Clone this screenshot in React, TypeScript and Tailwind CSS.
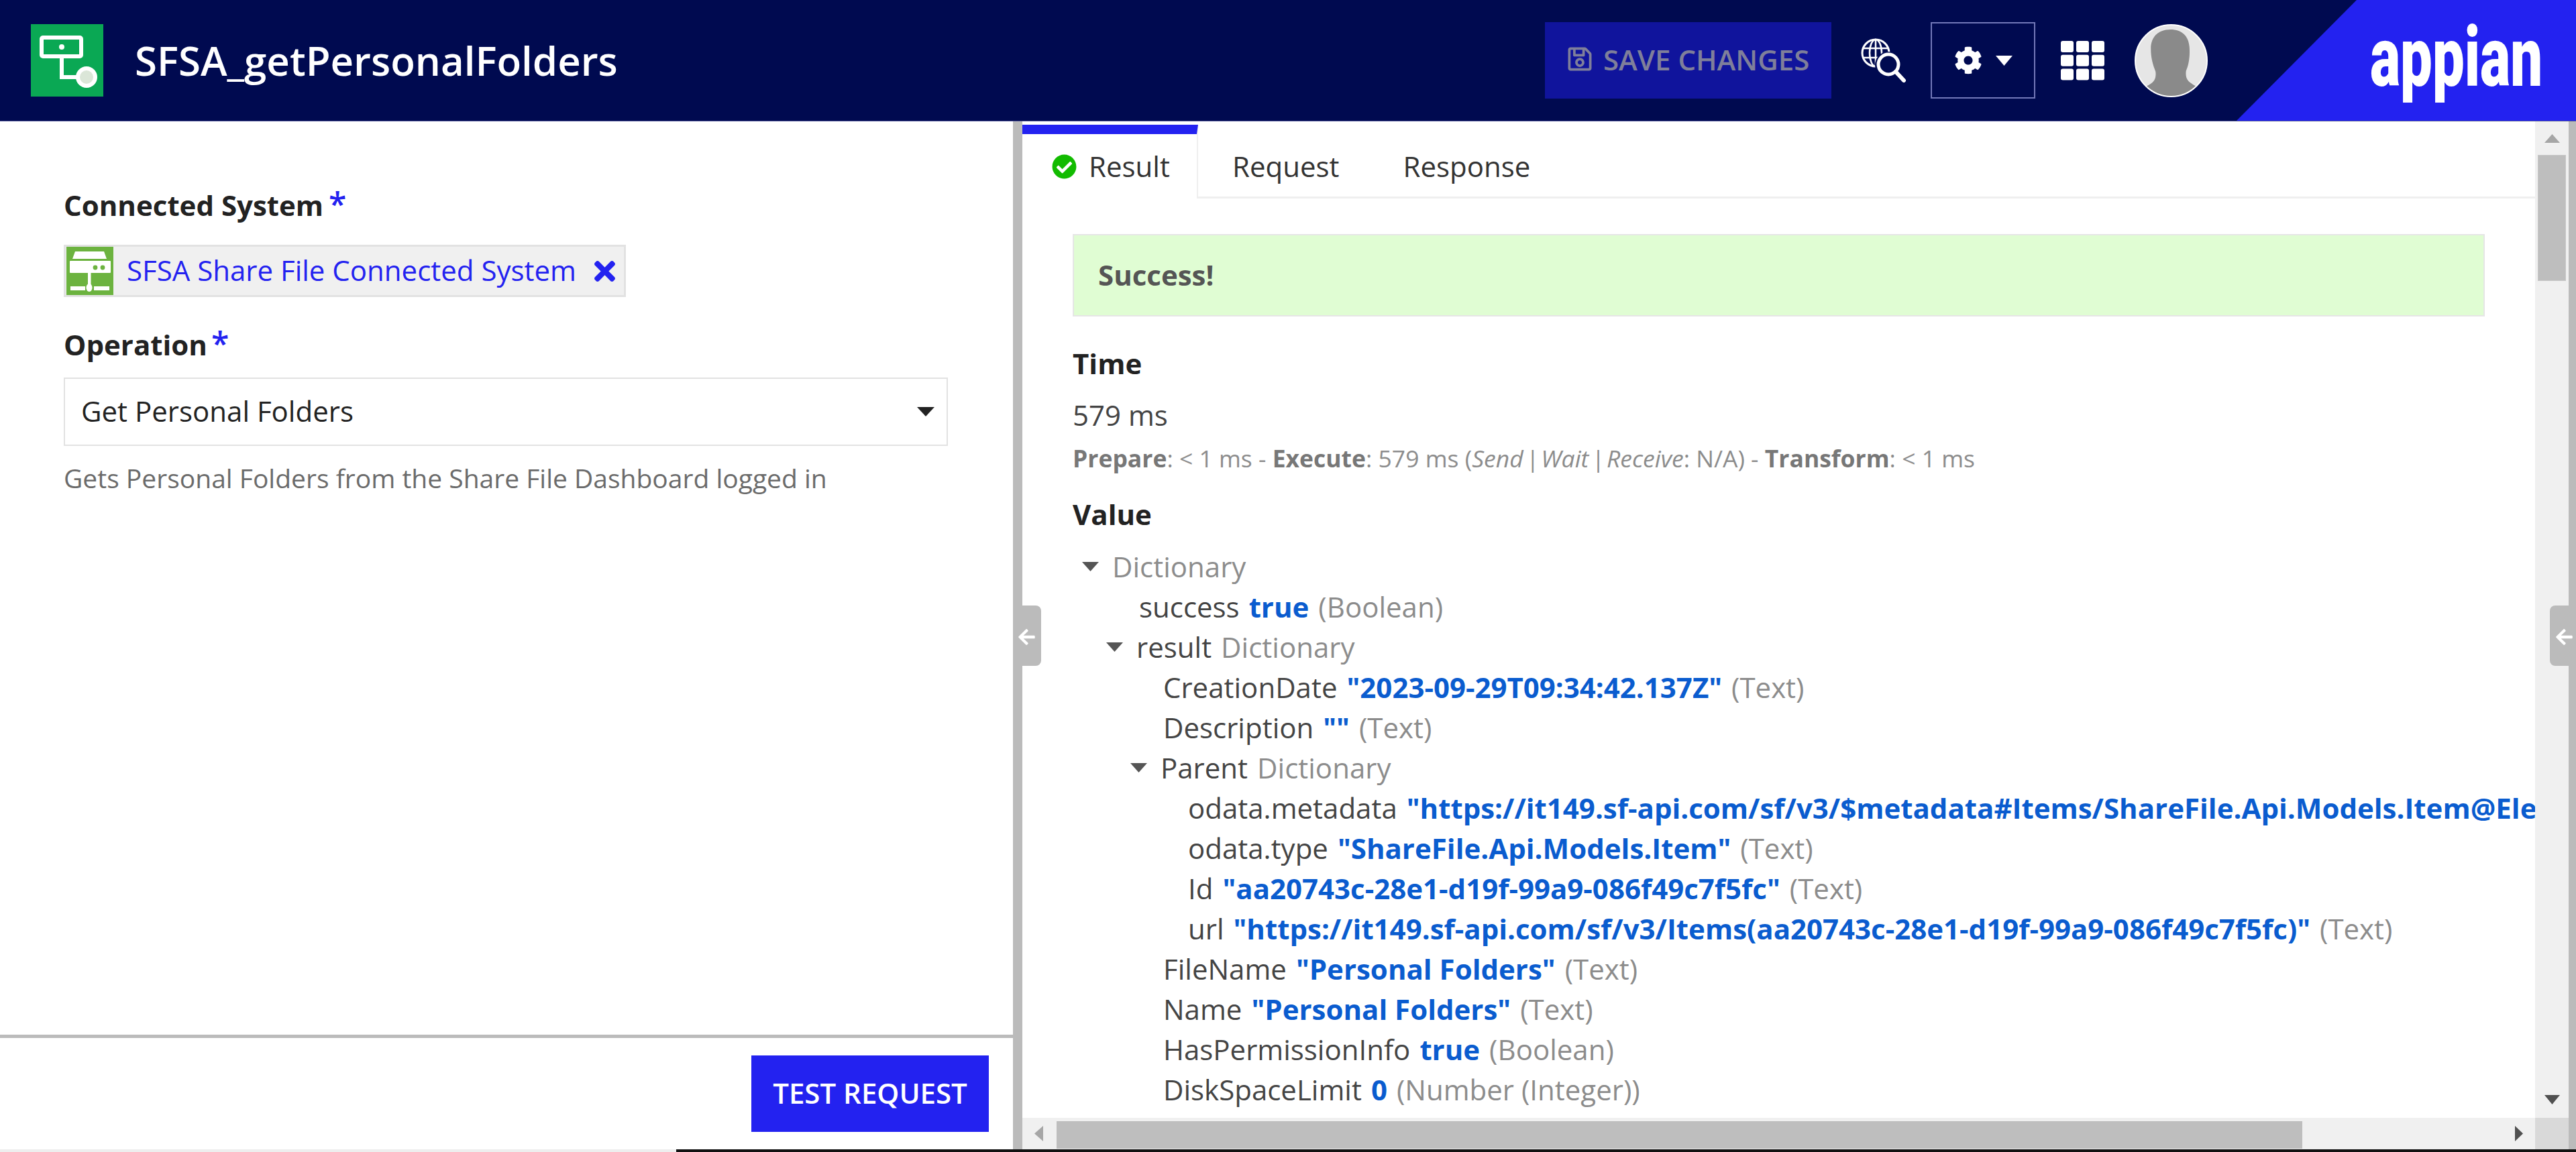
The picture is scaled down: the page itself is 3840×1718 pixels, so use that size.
import React from "react";
import { FaArrowLeft, FaCheckCircle, FaCog, FaRegSave, FaTimes } from "react-icons/fa";

const font = { fontFamily: '"Open Sans", "Noto Sans", sans-serif' };

function Tri({ dir, className }: { dir: "up" | "down" | "left" | "right"; className: string }) {
  const pts = { up: "50,0 100,100 0,100", down: "0,0 100,0 50,100", left: "100,0 100,100 0,50", right: "0,0 100,50 0,100" }[dir];
  return (
    <svg viewBox="0 0 100 100" preserveAspectRatio="none" className={className}>
      <polygon points={pts} fill="currentColor" />
    </svg>
  );
}

function ObjectIcon() {
  return (
    <svg viewBox="0 0 108 108" className="w-[108px] h-[108px] shrink-0">
      <rect width="108" height="108" fill="#0aa854" />
      <rect x="16" y="20" width="59" height="28" rx="2" fill="none" stroke="#fff" strokeWidth="6" />
      <circle cx="46" cy="34" r="4" fill="#fff" />
      <path d="M46 48V79H70" fill="none" stroke="#fff" strokeWidth="6" />
      <circle cx="83" cy="79" r="13" fill="#dbe6d8" stroke="#fff" strokeWidth="6" />
    </svg>
  );
}

function SystemIcon() {
  return (
    <svg viewBox="0 0 70 72" className="w-[70px] h-[72px] shrink-0">
      <rect width="70" height="72" fill="#6cb33f" />
      <path d="M13 7H56L60 18H9Z" fill="#fff" />
      <rect x="5" y="21" width="61" height="18" rx="1" fill="#fff" />
      <circle cx="43" cy="31" r="3.4" fill="#6cb33f" />
      <circle cx="54" cy="31" r="3.4" fill="#6cb33f" />
      <rect x="32" y="39" width="4.5" height="20" fill="#fff" />
      <rect x="6" y="59" width="22" height="6" fill="#fff" />
      <rect x="41" y="59" width="23" height="6" fill="#fff" />
      <ellipse cx="34" cy="61" rx="4.5" ry="6" fill="#fff" />
    </svg>
  );
}

function GlobeSearch() {
  return (
    <svg viewBox="0 0 68 66" className="w-[68px] h-[66px] shrink-0" fill="none" stroke="#fff">
      <circle cx="22" cy="22" r="20" strokeWidth="3" />
      <ellipse cx="22" cy="22" rx="9" ry="20" strokeWidth="2.5" />
      <path d="M22 2V42M3 15H41M3 29H41" strokeWidth="2.5" />
      <circle cx="41" cy="40" r="20" fill="#000a50" stroke="none" />
      <circle cx="41" cy="39" r="15" strokeWidth="5" />
      <path d="M52 50L64 63" strokeWidth="6" strokeLinecap="round" />
    </svg>
  );
}

function GridIcon() {
  const cells = [0, 23, 46];
  return (
    <svg viewBox="0 0 66 59" className="w-[66px] h-[59px] shrink-0" fill="#fff">
      {cells.map((x) =>
        cells.map((y) => <rect key={`${x}-${y}`} x={x} y={y * 0.9} width="19" height="17" rx="3" />)
      )}
    </svg>
  );
}

function Avatar() {
  return (
    <svg viewBox="0 0 108 108" className="w-[109px] h-[109px] shrink-0">
      <defs>
        <clipPath id="avatarClip">
          <circle cx="54" cy="54" r="52" />
        </clipPath>
      </defs>
      <circle cx="54" cy="54" r="53" fill="#e6e6e6" stroke="#fff" strokeWidth="2" />
      <path
        clipPath="url(#avatarClip)"
        d="M53 8C34 8 24 20 24 36C24 50 27 60 31 70C32 78 30 84 24 88C18 92 13 94 11 97L30 112H78L98 97C94 93 88 91 83 87C77 83 75 77 76 69C80 60 82 48 81 34C80 18 70 8 53 8Z"
        fill="#8a8a8a"
      />
    </svg>
  );
}

function AppianLogo() {
  return (
    <div className="relative w-[251px] h-[96px] overflow-visible">
      <span
        className="absolute left-[-5px] top-[-41px] origin-left scale-x-[0.685] text-white text-[124px] leading-[170px] font-black whitespace-nowrap"
        style={{ fontFamily: "Roboto, sans-serif" }}
      >
        appian
      </span>
    </div>
  );
}

type Row = { pad: string; arrow?: boolean; key?: string; value?: string; type: string };

const rows: Row[] = [
  { pad: "pl-[89px]", arrow: true, type: "Dictionary" },
  { pad: "pl-[174px]", key: "success", value: "true", type: "(Boolean)" },
  { pad: "pl-[125px]", arrow: true, key: "result", type: "Dictionary" },
  { pad: "pl-[210px]", key: "CreationDate", value: '"2023-09-29T09:34:42.137Z"', type: "(Text)" },
  { pad: "pl-[210px]", key: "Description", value: '""', type: "(Text)" },
  { pad: "pl-[161px]", arrow: true, key: "Parent", type: "Dictionary" },
  { pad: "pl-[247px]", key: "odata.metadata", value: '"https://it149.sf-api.com/sf/v3/$metadata#Items/ShareFile.Api.Models.Item@Element"', type: "(Text)" },
  { pad: "pl-[247px]", key: "odata.type", value: '"ShareFile.Api.Models.Item"', type: "(Text)" },
  { pad: "pl-[247px]", key: "Id", value: '"aa20743c-28e1-d19f-99a9-086f49c7f5fc"', type: "(Text)" },
  { pad: "pl-[247px]", key: "url", value: '"https://it149.sf-api.com/sf/v3/Items(aa20743c-28e1-d19f-99a9-086f49c7f5fc)"', type: "(Text)" },
  { pad: "pl-[210px]", key: "FileName", value: '"Personal Folders"', type: "(Text)" },
  { pad: "pl-[210px]", key: "Name", value: '"Personal Folders"', type: "(Text)" },
  { pad: "pl-[210px]", key: "HasPermissionInfo", value: "true", type: "(Boolean)" },
  { pad: "pl-[210px]", key: "DiskSpaceLimit", value: "0", type: "(Number (Integer))" },
];

function TreeRow({ row }: { row: Row }) {
  return (
    <div className={`flex items-center h-[60px] leading-[60px] whitespace-nowrap ${row.pad}`}>
      {row.arrow && <Tri dir="down" className="w-[25px] h-[14px] mr-[20px] shrink-0 text-[#555555]" />}
      {row.key && <span className="text-[#444444] mr-[14px]">{row.key}</span>}
      {row.value && <span className="text-[#0a5ccf] font-bold mr-[14px]">{row.value}</span>}
      <span className="text-[#8c8c8c]">{row.type}</span>
    </div>
  );
}

export default function App() {
  return (
    <div className="relative w-[3840px] h-[1718px] flex flex-col overflow-hidden bg-white" style={font}>
      {/* Header */}
      <header className="h-[181px] shrink-0 flex items-center bg-[#000a50] border-b border-[#4a5096] pl-[46px]">
        <ObjectIcon />
        <h1 className="ml-[47px] text-white text-[60px] leading-[80px] font-semibold whitespace-nowrap">SFSA_getPersonalFolders</h1>
        <div className="flex-1" />
        <button className="w-[427px] h-[114px] flex items-center pl-[32px] pb-[4px] gap-[15px] bg-[#10149c] text-[#7f7f9a] text-[42px] font-semibold whitespace-nowrap">
          <FaRegSave className="w-[40px] h-[40px]" />
          SAVE CHANGES
        </button>
        <div className="ml-[44px]"><GlobeSearch /></div>
        <div className="ml-[36px] w-[156px] h-[114px] flex items-center justify-center gap-[20px] border-2 border-[#7278b8]">
          <FaCog className="w-[42px] h-[42px] text-white" />
          <Tri dir="down" className="w-[25px] h-[15px] text-white" />
        </div>
        <div className="ml-[38px]"><GridIcon /></div>
        <div className="ml-[44px]"><Avatar /></div>
        <div className="ml-[43px] w-[506px] h-[180px] flex items-center pl-[204px] bg-[#2322f0] [clip-path:polygon(179px_0,100%_0,100%_100%,0_100%)]">
          <AppianLogo />
        </div>
      </header>

      {/* Body */}
      <div className="flex-1 flex min-h-0">
        {/* Left form */}
        <div className="w-[1510px] shrink-0 flex flex-col">
          <div className="flex-1 pt-[93px] pl-[95px] pr-[97px]">
            <div className="h-[60px] leading-[60px] text-[42px] font-bold text-[#222222] whitespace-nowrap">
              Connected System<span className="ml-[8px] text-[48px] font-semibold text-[#2322f0]">*</span>
            </div>
            <div className="mt-[31px] w-[838px] h-[78px] flex items-center bg-[#f0f0f0] border-[3px] border-[#e2e2e2] pl-[1px]">
              <SystemIcon />
              <span className="ml-[20px] pb-[4px] text-[42px] text-[#2322f0] whitespace-nowrap">SFSA Share File Connected System</span>
              <FaTimes className="ml-[27px] w-[31px] h-[45px] text-[#2322f0]" />
            </div>
            <div className="mt-[39px] h-[60px] leading-[60px] text-[42px] font-bold text-[#222222]">
              Operation<span className="ml-[6px] text-[48px] font-semibold text-[#2322f0]">*</span>
            </div>
            <div className="mt-[21px] w-[1318px] h-[102px] flex items-center justify-between pl-[24px] pr-[18px] border-2 border-[#e2e2e2]">
              <span className="pb-[4px] text-[42px] text-[#222222]">Get Personal Folders</span>
              <Tri dir="down" className="w-[26px] h-[14px] text-[#222222]" />
            </div>
            <div className="mt-[18px] h-[60px] leading-[60px] text-[39px] text-[#6b6b6b] whitespace-nowrap">
              Gets Personal Folders from the Share File Dashboard logged in
            </div>
          </div>
          <div className="h-[5px] bg-[#bbbbbb]" />
          <div className="h-[166px] shrink-0 flex justify-end pt-[26px] pr-[36px]">
            <button className="w-[354px] h-[114px] pb-[4px] bg-[#2322f0] text-white text-[42px] font-semibold whitespace-nowrap">TEST REQUEST</button>
          </div>
        </div>

        <div className="w-[14px] shrink-0 bg-[#bbbbbb]" />

        {/* Right result panel */}
        <div className="flex-1 min-w-0 flex">
          <div className="flex-1 min-w-0 flex flex-col">
            <div className="flex-1 min-h-0 flex">
              <div className="flex-1 min-w-0 overflow-hidden text-[42px]">
                {/* Tabs */}
                <div className="flex h-[115px] pt-[5px] text-[#333333]">
                  <div className="w-[262px] border-t-[14px] border-[#2322f0] border-r-2 border-r-[#efefef] flex items-start pt-[18px] pl-[44px] gap-[18px] leading-[60px]">
                    <FaCheckCircle className="w-[37px] h-[37px] mt-[12px] text-[#12bb00]" />
                    <span>Result</span>
                  </div>
                  <div className="flex-1 flex border-b-[3px] border-[#efefef] pt-[32px] leading-[60px]">
                    <span className="ml-[51px]">Request</span>
                    <span className="ml-[95px]">Response</span>
                  </div>
                </div>
                {/* Content */}
                <div className="ml-[75px] mr-[75px] mt-[53px] h-[123px] flex items-center pl-[36px] bg-[#e0fdd3] border-2 border-[#e6e6e6] text-[42px] font-bold text-[#555555]">
                  <span className="pb-[2px]">Success!</span>
                </div>
                <div className="ml-[75px] mt-[40px] h-[60px] leading-[60px] font-bold text-[#222222]">Time</div>
                <div className="ml-[75px] mt-[17px] h-[60px] leading-[60px] text-[#444444]">579 ms</div>
                <div className="ml-[75px] mt-[9px] h-[50px] leading-[50px] text-[35.5px] text-[#8c8c8c] whitespace-nowrap">
                  <b className="font-bold text-[#777777]">Prepare</b>: &lt; 1 ms - <b className="font-bold text-[#777777]">Execute</b>: 579 ms (<i>Send{"\u200A"}|{"\u200A"}Wait{"\u200A"}|{"\u200A"}Receive</i>: N/A) - <b className="font-bold text-[#777777]">Transform</b>: &lt; 1 ms
                </div>
                <div className="ml-[75px] mt-[29px] h-[60px] leading-[60px] font-bold text-[#222222]">Value</div>
                <div className="mt-[18px]">
                  {rows.map((r, i) => (
                    <TreeRow key={i} row={r} />
                  ))}
                </div>
              </div>
              {/* Vertical scrollbar */}
              <div className="w-[50px] shrink-0 flex flex-col items-center bg-[#f0f0f0] pt-[19px] pb-[20px]">
                <Tri dir="up" className="w-[23px] h-[13px] text-[#a6a6a6]" />
                <div className="mt-[18px] w-[42px] h-[188px] bg-[#bebebe] border border-[#c8c8c8]" />
                <div className="flex-1" />
                <Tri dir="down" className="w-[23px] h-[14px] text-[#505050]" />
              </div>
            </div>
            {/* Horizontal scrollbar */}
            <div className="h-[47px] shrink-0 flex">
              <div className="flex-1 flex items-center bg-[#f0f0f0] pl-[18px] pr-[18px]">
                <Tri dir="left" className="w-[13px] h-[23px] text-[#a6a6a6]" />
                <div className="ml-[20px] w-[1857px] h-[41px] mt-[4px] bg-[#bebebe]" />
                <div className="flex-1" />
                <Tri dir="right" className="w-[12px] h-[23px] text-[#505050]" />
              </div>
              <div className="w-[50px] bg-[#d9d9d9]" />
            </div>
          </div>
          <div className="w-[11px] shrink-0 bg-[#bbbbbb]" />
        </div>
      </div>

      {/* Sliver of the window edge below */}
      <div className="h-[4px] shrink-0 flex">
        <div className="w-[1008px] bg-[#eeeeee]" />
        <div className="flex-1 bg-[#111111]" />
      </div>

      {/* Splitter handles lie over the panels */}
      <div className="absolute left-[1524px] top-[903px] w-[28px] h-[90px] bg-[#bbbbbb] rounded-r-lg" />
      <FaArrowLeft className="absolute left-[1517px] top-[936px] w-[27px] h-[28px] text-white" />
      <div className="absolute left-[3801px] top-[903px] w-[39px] h-[90px] bg-[#bbbbbb] rounded-l-lg" />
      <FaArrowLeft className="absolute left-[3809px] top-[936px] w-[27px] h-[28px] text-white" />
    </div>
  );
}
